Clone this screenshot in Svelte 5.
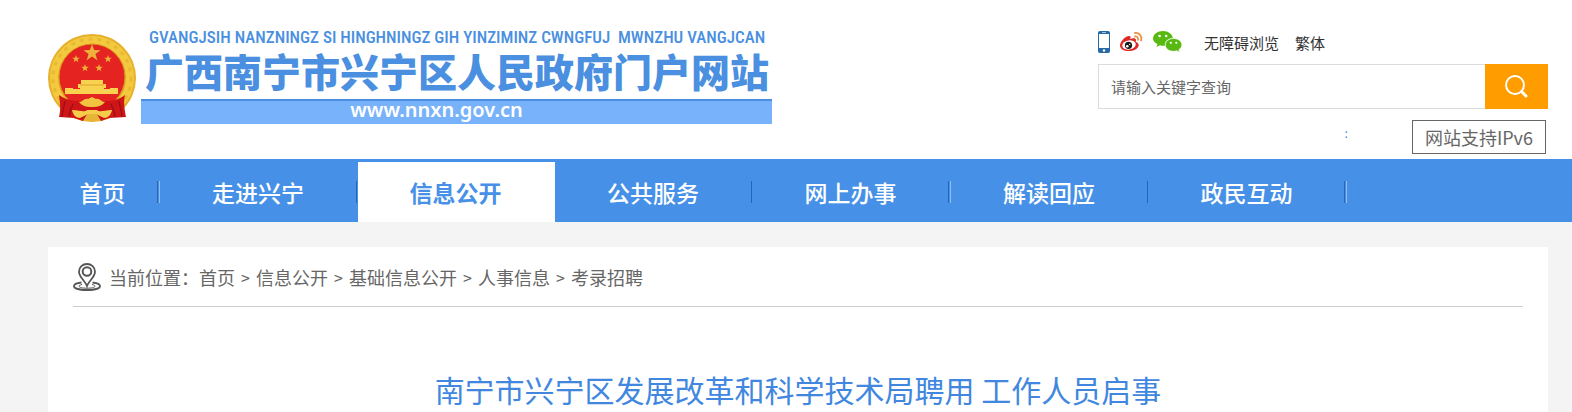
<script>
    const navItems = [
        { label: '首页', glow: true },
        { label: '走进兴宁' },
        { label: '信息公开', active: true },
        { label: '公共服务' },
        { label: '网上办事', glow: true },
        { label: '解读回应' },
        { label: '政民互动', glow: true }
    ];

    const crumbs = ['首页', '信息公开', '基础信息公开', '人事信息', '考录招聘'];

    const STAR = '0,-10 2.4,-3.2 9.5,-3.1 3.8,1.2 5.9,8.1 0,4 -5.9,8.1 -3.8,1.2 -9.5,-3.1 -2.4,-3.2';

    let keyword = $state('');
</script>

<header class="header">
    <a class="logo" href="#home">
        <svg class="emblem" viewBox="0 0 88 88" aria-hidden="true">
            <circle cx="44" cy="44" r="44" fill="#e6b02c" />
            <circle cx="44" cy="44" r="38" fill="none" stroke="#f3c93f" stroke-width="8" />
            <circle cx="44" cy="44" r="39" fill="none" stroke="#e9b932" stroke-width="3" stroke-dasharray="4 5" />
            <circle cx="44" cy="43" r="33" fill="#e52320" stroke="#d8961d" />
            <g fill="#edb23c">
                <polygon points={STAR} transform="translate(44 19) scale(.9)" />
                <polygon points={STAR} transform="translate(28 25) scale(.4)" />
                <polygon points={STAR} transform="translate(60 25) scale(.4)" />
                <polygon points={STAR} transform="translate(37 34) scale(.4)" />
                <polygon points={STAR} transform="translate(51 34) scale(.4)" />
            </g>
            <path d="M33 46h22v4h3v4h-2v1h6v-1h8v6H17v-6h8v1h7v-1h-2v-4h3z" fill="#f8d350" />
            <path d="M32 51h24" stroke="#e0a02c" stroke-width="1" />
            <path d="M11 61c11 8 23 6 33 6c11 0 23 2 33-6c-2 8 0 16 1 22l-17 1l-8 3H35l-9-3l-15-1c2-7 1-14 0-22z" fill="#cf1518" />
            <path d="M17 67c-1 7-3 11-3 16M25 70c-2 5-4 8-4 13M71 67c1 7 3 11 3 16M63 70c2 5 4 8 4 13" fill="none" stroke="#9c0f13" stroke-width="1.4" />
            <path d="M31 68c4 0 5-4 9-3l4-2l4 2c4-1 5 3 9 3c-3 4-7 5-13 5s-10-1-13-5z" fill="#f2c33f" />
            <path d="M24 76c8 0 12 3 15 0h10c3 3 7 0 15 0c-1 5-4 8-8 8l-8-4h-8l-8 4c-4 0-7-3-8-8z" fill="#f5cd4b" />
            <path d="M35 87l4-7h10l4 7z" fill="#e6b535" />
        </svg>
        <span class="wordmark">
            <span class="latin">GVANGJSIH NANZNINGZ SI HINGHNINGZ GIH YINZIMINZ CWNGFUJ&nbsp; MWNZHU VANGJCAN</span>
            <span class="site-name">广西南宁市兴宁区人民政府门户网站</span>
            <span class="domain">www.nnxn.gov.cn</span>
        </span>
    </a>

    <div class="tools">
        <div class="quick">
            <a class="icon" href="#mobile" aria-label="手机版">
                <svg width="12" height="22" viewBox="0 0 12 22">
                    <rect width="12" height="22" rx="2" fill="#256aa4" />
                    <rect x="1" y="3" width="10" height="14" fill="#fff" />
                    <path d="M4 1.5h4" stroke="#9fc4e2" />
                    <circle cx="6" cy="19.5" r="1.2" fill="#fff" />
                </svg>
            </a>
            <a class="icon" href="#weibo" aria-label="微博">
                <svg width="23" height="20" viewBox="0 0 23 20">
                    <path d="M9 4c2 0 2 1 1 3c3-1 6-1 6 1c0 1-.5 2 0 2c2 .6 3 2 2.600 4c-1 3-5 5-10 5S0 17 0 13.500C0 10 5 4 9 4z" fill="#dc2b26" />
                    <ellipse cx="9" cy="13" rx="6.800" ry="4.600" fill="#fff" transform="rotate(-8 9 13)" />
                    <circle cx="8.500" cy="13.300" r="3.600" fill="#191919" />
                    <circle cx="7.300" cy="14.200" r="1.300" fill="#fff" />
                    <circle cx="9.700" cy="12.400" r=".7" fill="#fff" />
                    <path d="M15 1c4-.6 7.500 3 6 7.500M15 4.500c2-.3 3.600 1.200 3 3.300" fill="none" stroke="#ee9145" stroke-width="1.800" stroke-linecap="round" />
                </svg>
            </a>
            <a class="icon wechat" href="#wechat" aria-label="微信">
                <svg width="29" height="22" viewBox="0 0 29 22">
                    <path d="M10 0c5.500 0 9.600 3.300 9.800 7.300c-5 0-8.300 3-7.800 7.400c-1.600.3-3.600.1-5-.4L3.500 16l1-3C1.800 11.600 0 9.800 0 7.400C0 3.300 4.500 0 10 0z" fill="#58b911" />
                    <path d="M20.500 7.500c4.700 0 8.300 2.900 8.300 6.300c0 2-1.200 3.800-3 5l.7 2.500l-2.900-1.500c-6 1.700-11.300-1.400-11.300-6c0-3.400 3.500-6.300 8.200-6.300z" fill="#58b911" stroke="#fff" stroke-width=".6" />
                    <g fill="#fff">
                        <circle cx="6.600" cy="5" r="1.300" />
                        <circle cx="13.200" cy="5" r="1.300" />
                        <circle cx="17.800" cy="11.800" r="1.100" />
                        <circle cx="23.300" cy="11.800" r="1.100" />
                    </g>
                </svg>
            </a>
            <a href="#accessible">无障碍浏览</a>
            <a href="#traditional">繁体</a>
        </div>

        <form class="search" onsubmit={(e) => e.preventDefault()}>
            <input type="text" bind:value={keyword} placeholder="请输入关键字查询" aria-label="请输入关键字查询" />
            <button type="submit" aria-label="搜索">
                <svg width="24" height="24" viewBox="0 0 24 24" fill="none" stroke="#fff" stroke-linecap="round">
                    <circle cx="10" cy="10" r="9" stroke-width="2" />
                    <path d="M16.500 16.500l4.500 4.500" stroke-width="3" />
                </svg>
            </button>
        </form>

        <div class="support">
            <span class="colon">:</span>
            <a class="ipv6" href="#ipv6">网站支持IPv6</a>
        </div>
    </div>
</header>

<nav class="nav">
    <ul>
        {#each navItems as item}
            <li class:active={item.active} class:glow={item.glow}>
                <a href="#nav">{item.label}</a>
            </li>
        {/each}
    </ul>
</nav>

<main class="page">
    <article class="panel">
        <div class="crumbs">
            <svg width="28" height="28" viewBox="0 0 28 28" fill="none" stroke="#555" aria-hidden="true">
                <path d="M8.500 19.500C4 20 1 21.300 1 23.200C1 25.500 7 27 14 27s13-1.500 13-3.800c0-1.900-3-3.200-7.500-3.700" stroke-width="1.800" />
                <path d="M9 21.500c-2 .4-3 1-3 1.700c0 1.200 3.500 2 8 2s8-.8 8-2c0-.7-1-1.300-3-1.700" stroke-width="1" />
                <path d="M14 23C12 17.500 6 14 6 8.700C6 4.200 9.600 1 14 1s8 3.200 8 7.700C22 14 16 17.500 14 23z" fill="#fff" stroke-width="1.800" />
                <circle cx="14" cy="8.500" r="4.300" stroke-width="2" />
            </svg>
            <span>当前位置：</span>
            {#each crumbs as crumb, i}
                {#if i > 0}<span class="sep">&gt;</span>{/if}
                <a href="#crumb">{crumb}</a>
            {/each}
        </div>
        <h1>南宁市兴宁区发展改革和科学技术局聘用 工作人员启事</h1>
    </article>
</main>

<style>
    :global(body) {
        margin: 0;
        background: #f4f4f4;
        font-family: "Noto Sans CJK SC", sans-serif;
        color: #666;
    }

    a {
        color: inherit;
        text-decoration: none;
    }

    .header {
        display: flex;
        justify-content: space-between;
        align-items: flex-start;
        padding: 27px 24px 5px 48px;
        background: #fff;
    }

    .logo {
        display: flex;
        align-items: flex-start;
        gap: 5px;
        color: #4a8fe0;
    }

    .emblem {
        width: 88px;
        height: 88px;
        margin-top: 7px;
    }

    .wordmark {
        display: flex;
        flex-direction: column;
        width: 631px;
        white-space: nowrap;
    }

    .latin {
        padding-left: 8px;
        font: 500 17px/20px "Roboto Condensed", "Noto Sans CJK SC", sans-serif;
    }

    .site-name {
        padding-left: 4px;
        font-size: 39px;
        font-weight: 900;
        line-height: 46px;
        margin-bottom: 6px;
    }

    .domain {
        box-sizing: border-box;
        height: 25px;
        border-top: 2px solid #4c8fe0;
        padding-right: 40px;
        background: #78b2fa;
        color: #fff;
        font: 600 20px/18px "Noto Sans", sans-serif;
        text-align: center;
    }

    .tools {
        width: 450px;
    }

    .quick {
        display: flex;
        align-items: center;
        height: 30px;
        gap: 16px;
        margin-bottom: 7px;
        color: #333;
        font-size: 15px;
    }

    .icon {
        display: flex;
        margin-right: -6px;
    }

    .wechat {
        margin-right: 6px;
    }

    .search {
        display: flex;
        height: 45px;
    }

    .search input {
        flex: 1;
        min-width: 0;
        box-sizing: border-box;
        border: 1px solid #dcdcdc;
        border-right: 0;
        border-radius: 0;
        padding: 0 12px;
        outline: none;
        font: 15px "Noto Sans CJK SC", sans-serif;
        color: #666;
    }

    .search input::placeholder {
        color: #666;
        opacity: 1;
    }

    .search button {
        display: flex;
        align-items: center;
        justify-content: center;
        width: 63px;
        border: 0;
        padding: 0;
        background: #ff9c00;
        cursor: pointer;
    }

    .support {
        display: flex;
        justify-content: flex-end;
        gap: 64px;
        margin: 11px 2px 0 0;
    }

    .colon {
        color: #4791e7;
        font-size: 12px;
        line-height: 26px;
    }

    .ipv6 {
        border: 1px solid #666;
        padding: 0 12px;
        font-size: 18px;
        line-height: 32px;
    }

    .nav {
        border-top: 3px solid #4691e7;
        padding-left: 48px;
        background: #4691e7;
    }

    .nav ul {
        display: flex;
        margin: 0;
        padding: 0;
        list-style: none;
    }

    .nav li {
        display: flex;
        align-items: center;
        width: 198px;
        height: 60px;
        color: #fff;
        font-size: 23px;
        font-weight: 500;
    }

    .nav li:first-child {
        width: 112px;
    }

    .nav li a {
        flex: 1;
        line-height: 60px;
        text-align: center;
    }

    .nav li::after {
        content: "";
        box-sizing: border-box;
        width: 2px;
        height: 22px;
        border-left: 1px solid #2168bd;
    }

    .nav li.glow::after {
        width: 3px;
        border-right: 1px solid #8fbdf2;
    }

    .nav li.active {
        width: 197px;
        background: #fff;
        color: #4691e7;
        font-weight: 700;
    }

    .nav li.active::after {
        border: 0;
    }

    .page {
        padding: 25px 24px 0 48px;
    }

    .panel {
        padding: 0 25px;
        background: #fff;
    }

    .crumbs {
        display: flex;
        align-items: center;
        height: 58px;
        padding-top: 1px;
        border-bottom: 1px solid #ccc;
        font-size: 18px;
    }

    .crumbs svg {
        margin-right: 8px;
    }

    .sep {
        width: 21px;
        font-size: 16px;
        text-align: center;
    }

    h1 {
        margin: 0;
        padding: 60px 0 0;
        color: #4187e0;
        font-size: 30px;
        font-weight: 400;
        line-height: 45px;
        text-align: center;
    }
</style>
